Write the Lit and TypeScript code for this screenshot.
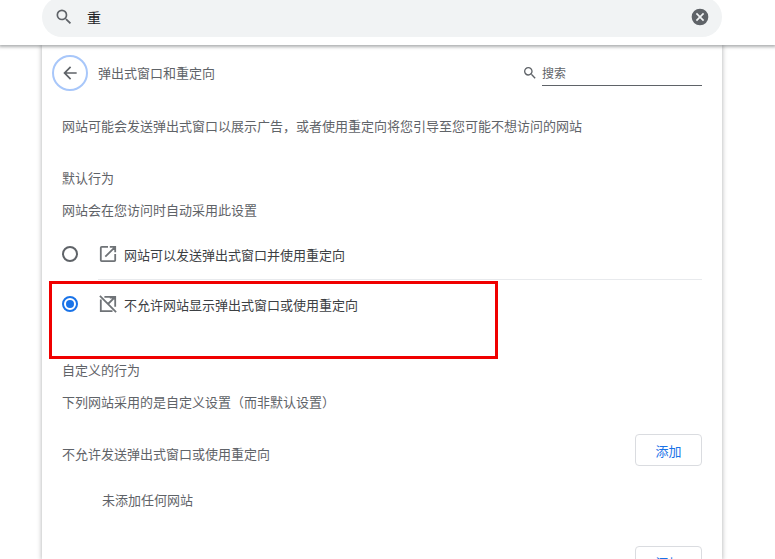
import { LitElement, html, css } from "lit";
import { customElement } from "lit/decorators.js";

@customElement("app-root")
export class AppRoot extends LitElement {
  static styles = css`
    :host { display: block; width: 775px; height: 559px; overflow: hidden; position: relative; background: #fff;
      font-family: "Noto Sans CJK SC", "Liberation Sans", sans-serif; font-size: 13px; color: #5f6368; }
    .top { height: 45px; box-sizing: border-box; background: #fff; box-shadow: 0 1px 3px 1px rgba(60,64,67,.42); position: relative; z-index: 2; overflow: hidden; }
    .pill { margin: -3px 0 0 42px; width: 680px; height: 40px; border-radius: 20px; background: #f1f3f4; display: flex; align-items: center; box-sizing: border-box; padding: 0 12px; }
    .pill .q { width: 20px; height: 20px; fill: #5f6368; flex: none; }
    .pill .v { margin-left: 13px; color: #202124; font-size: 14px; flex: 1; }
    .pill .x { width: 20px; height: 20px; fill: #5f6368; flex: none; }
    .card { margin-left: 42px; width: 680px; height: 514px; box-sizing: border-box; background: #fff; box-shadow: 0 0 4px 1px rgba(60,64,67,.3); padding: 0 20px; }
    .sub { height: 56px; display: flex; align-items: center; margin-left: -10px; box-sizing: border-box; }
    .back { width: 36px; height: 36px; border-radius: 50%; box-sizing: border-box; border: 2px solid #a8c7fa; display: flex; align-items: center; justify-content: center; flex: none; }
    .back svg { width: 20px; height: 20px; fill: #5f6368; }
    .title { margin: -2px 0 0 10px; flex: 1; font-size: 13px; }
    .find { width: 160px; height: 26px; display: flex; align-items: center; border-bottom: 1px solid #5f6368; position: relative; box-sizing: border-box; }
    .find span { font-size: 12px; }
    .find svg { position: absolute; left: -20px; top: 5px; width: 16px; height: 16px; fill: #5f6368; }
    .line { height: 32px; line-height: 32px; }
    .desc { margin-top: 9px; }
    .h { margin-top: 20px; }
    .radio { display: flex; align-items: center; height: 48px; }
    .first { margin-top: 4px; height: 49px; padding-bottom: 1px; box-sizing: border-box; }
    .after { margin-top: 26px; }
    .dot { width: 16px; height: 16px; border-radius: 50%; box-sizing: border-box; border: 2px solid #5f6368; flex: none; display: flex; align-items: center; justify-content: center; }
    .dot.on { border-color: #1a73e8; }
    .dot.on::after { content: ""; width: 8px; height: 8px; border-radius: 50%; background: #1a73e8; }
    .ic { width: 18px; height: 18px; margin-left: 21px; flex: none; fill: none; stroke: #6f7377; stroke-width: 2; }
    .lab { margin-left: 7px; color: #3c4043; }
    .div { height: 1px; background: #e8eaed; margin-left: 36px; }
    .add-row { display: flex; justify-content: space-between; height: 32px; }
    .add-row.block { margin-top: 16px; }
    .add-row span { padding-top: 8px; line-height: 24px; }
    .btn { width: 67px; height: 32px; box-sizing: border-box; border: 1px solid #dadce0; border-radius: 4px; color: #1a73e8; display: flex; align-items: center; justify-content: center; background: #fff; font-size: 13px; }
    .empty { margin: 18px 0 0 40px; height: 32px; line-height: 32px; }
    .add-row.next { margin-top: 30px; justify-content: flex-end; }
    .mark { position: absolute; left: 49px; top: 281px; width: 449px; height: 78px; box-sizing: border-box; border: 3px solid #f00000; z-index: 3; pointer-events: none; }
  `;

  render() {
    const search = "M15.5 14h-.79l-.28-.27A6.47 6.47 0 0 0 16 9.5 6.5 6.5 0 1 0 9.5 16c1.61 0 3.09-.59 4.23-1.57l.27.28v.79l5 4.99L20.49 19l-4.99-5zm-6 0C7.01 14 5 11.99 5 9.5S7.01 5 9.5 5 14 7.01 14 9.5 11.99 14 9.5 14z";
    return html`
      <div class="top">
        <div class="pill">
          <svg class="q" viewBox="0 0 24 24"><path d=${search}></path></svg>
          <span class="v">重</span>
          <svg class="x" viewBox="0 0 24 24"><path d="M12 2a10 10 0 1 0 0 20 10 10 0 0 0 0-20zm5 13.6L15.6 17 12 13.4 8.4 17 7 15.6l3.6-3.6L7 8.4 8.4 7l3.6 3.6L15.6 7 17 8.4 13.4 12l3.6 3.6z"></path></svg>
        </div>
      </div>
      <div class="card">
        <div class="sub">
          <div class="back"><svg viewBox="0 0 24 24"><path d="M20 11H7.83l5.59-5.59L12 4l-8 8 8 8 1.41-1.41L7.83 13H20v-2z"></path></svg></div>
          <div class="title">弹出式窗口和重定向</div>
          <div class="find"><svg viewBox="0 0 24 24"><path d=${search}></path></svg><span>搜索</span></div>
        </div>
        <div class="line desc">网站可能会发送弹出式窗口以展示广告，或者使用重定向将您引导至您可能不想访问的网站</div>
        <div class="line h">默认行为</div>
        <div class="line">网站会在您访问时自动采用此设置</div>
        <div class="radio first">
          <div class="dot"></div>
          <svg class="ic" viewBox="2 2 20 20"><path d="M12 4H5a1 1 0 0 0-1 1v14a1 1 0 0 0 1 1h14a1 1 0 0 0 1-1v-7M14 4h6v6M20 4 9 15"></path></svg>
          <span class="lab">网站可以发送弹出式窗口并使用重定向</span>
        </div>
        <div class="div"></div>
        <div class="radio">
          <div class="dot on"></div>
          <svg class="ic" viewBox="2 2 20 20"><path d="M3 3l18 18M4 7v13h13M8 4h12v11M14 5h6v6M20 4l-8 8"></path></svg>
          <span class="lab">不允许网站显示弹出式窗口或使用重定向</span>
        </div>
        <div class="line after">自定义的行为</div>
        <div class="line">下列网站采用的是自定义设置（而非默认设置）</div>
        <div class="add-row block"><span>不允许发送弹出式窗口或使用重定向</span><div class="btn">添加</div></div>
        <div class="empty">未添加任何网站</div>
        <div class="add-row next"><div class="btn">添加</div></div>
      </div>
      <div class="mark"></div>
    `;
  }
}
